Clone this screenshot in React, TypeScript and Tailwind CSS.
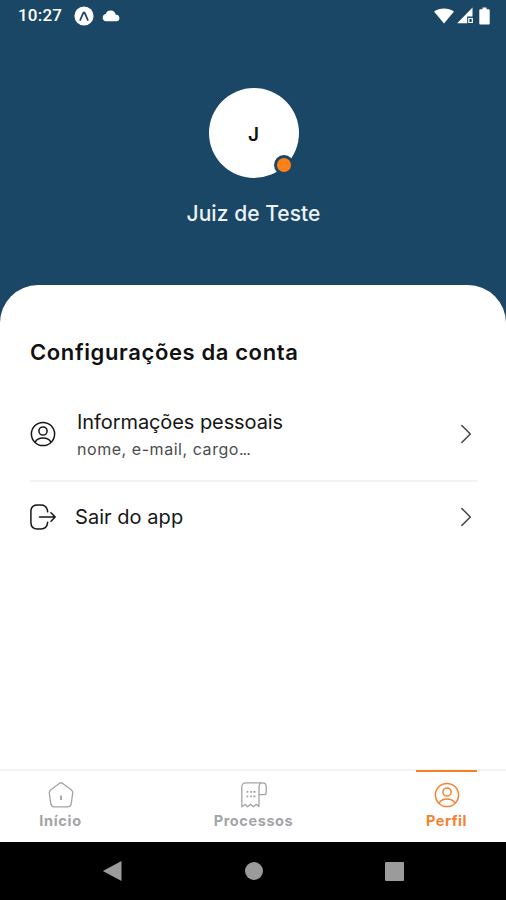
import type { ReactNode } from "react";

type Tab = {
  id: string;
  label: string;
  icon: ReactNode;
  labelClass: string;
};

function UserCircleIcon({ className }: { className: string }) {
  return (
    <svg
      viewBox="0 0 26 26"
      fill="none"
      stroke="currentColor"
      strokeWidth="1.5"
      className={className}
      aria-hidden="true"
    >
      <circle cx="13" cy="13" r="11.6" />
      <circle cx="13" cy="10" r="4.1" />
      <path d="M5.2 21.2c1.3-3 4.2-4.2 7.8-4.2s6.5 1.2 7.8 4.2" />
    </svg>
  );
}

function LogoutIcon() {
  return (
    <svg
      viewBox="0 0 28 28"
      fill="none"
      stroke="currentColor"
      strokeWidth="1.5"
      strokeLinecap="round"
      strokeLinejoin="round"
      className="h-7 w-7"
      aria-hidden="true"
    >
      <path d="M17.7 8.8C17.2 4.3 14.7 1.9 10.8 1.9H7.7C3.2 1.9.9 4.4.9 8.4v11.2c0 4 2.3 6.5 6.8 6.5h3.1c3.9 0 6.4-2.4 6.900-6.900" />
      <path d="M9.5 14H25.2M21 9.8 25.2 14 21 18.2" />
    </svg>
  );
}

function ChevronIcon() {
  return (
    <svg
      viewBox="0 0 12 20"
      fill="none"
      stroke="currentColor"
      strokeWidth="1.5"
      strokeLinecap="round"
      strokeLinejoin="round"
      className="h-5 w-3 text-[#444]"
      aria-hidden="true"
    >
      <path d="m1.8 1.5 8.5 8.5-8.5 8.5" />
    </svg>
  );
}

function HomeIcon() {
  return (
    <svg
      viewBox="0 0 26 26"
      fill="none"
      stroke="currentColor"
      strokeWidth="1.3"
      strokeLinejoin="round"
      className="h-[26px] w-[26px]"
      aria-hidden="true"
    >
      <path d="M11.2 1.4a3 3 0 0 1 3.6 0l8.6 6.6c1 .8 1.5 1.900 1.300 3.100l-1.500 10.500c-.3 2-1.600 3.200-3.500 3.200H6.300c-1.900 0-3.200-1.200-3.500-3.200L1.300 11.100C1.100 9.900 1.600 8.800 2.600 8z" />
      <path d="M13 13.500v4.500" strokeWidth="1.8" />
    </svg>
  );
}

function ReceiptIcon() {
  return (
    <svg
      viewBox="0 0 26 26"
      fill="none"
      stroke="currentColor"
      strokeWidth="1.3"
      strokeLinejoin="round"
      className="h-[26px] w-[26px]"
      aria-hidden="true"
    >
      <path d="M21.500.8H4.800C2.400.8.800 2.400.800 4.800v20l3.400-2.300 2.400 2.300 2.900-2.600 2.900 2.600 2.900-2.600 2.700 2.300V4.500C18 2.300 19.400.8 21.500.8c2.200 0 3.700 1.500 3.700 3.700v6c0 1.400-.8 2.200-2.200 2.200h-5" />
      <path
        d="M5.500 9.800h1.800M5.500 14.300h1.800M9.200 9.800h1.800M12.300 9.800h2.200M9.200 14.300h1.800M12.300 14.300h2.200"
        strokeWidth="1.7"
      />
    </svg>
  );
}

const TABS: ReadonlyArray<Tab> = [
  {
    id: "home",
    label: "Início",
    icon: <HomeIcon />,
    labelClass: "tracking-[0.7px]",
  },
  {
    id: "cases",
    label: "Processos",
    icon: <ReceiptIcon />,
    labelClass: "tracking-[0.6px]",
  },
  {
    id: "profile",
    label: "Perfil",
    icon: <UserCircleIcon className="h-[26px] w-[26px]" />,
    labelClass: "tracking-[0.5px]",
  },
];

function StatusBar() {
  return (
    <div className="flex h-[31px] items-center justify-between pl-[18px] pr-4 font-[Roboto,sans-serif] text-white">
      <div className="flex items-center">
        <span className="w-[56px] text-[17px] font-medium leading-none tracking-[0.2px]">
          10:27
        </span>
        <svg viewBox="0 0 20 20" className="h-5 w-5" aria-hidden="true">
          <circle cx="10" cy="10" r="9.6" fill="white" />
          <path
            d="M6.2 14 9.2 7.2q.8-1.5 1.6 0L13.8 14"
            fill="none"
            stroke="#1b4767"
            strokeWidth="1.8"
            strokeLinecap="round"
          />
        </svg>
        <svg
          viewBox="0 0 18 12"
          fill="white"
          className="ml-2 h-3 w-[18px]"
          aria-hidden="true"
        >
          <path d="M4 11.300a3.700 3.700 0 0 1-.3-7.300A5.200 5.200 0 0 1 13.700 4.700a3.300 3.300 0 0 1 .7 6.600z" />
        </svg>
      </div>
      <div className="flex items-center gap-0.5">
        <svg
          viewBox="0 0 20 16"
          fill="white"
          className="mr-px h-4 w-5"
          aria-hidden="true"
        >
          <path d="M0 3.500C5.500-.6 14.500-.6 20 3.500L10 15.600z" />
        </svg>
        <svg viewBox="0 0 16 17" className="h-[17px] w-4" aria-hidden="true">
          <path d="M15.500.5v9h-5.300v6.800H.2z" fill="white" />
          <path
            d="M11.800 11.500h3.500v4h-3.500z"
            fill="none"
            stroke="white"
            strokeWidth="1.2"
          />
        </svg>
        <svg
          viewBox="0 0 11 18"
          fill="white"
          className="ml-1 h-[18px] w-[11px]"
          aria-hidden="true"
        >
          <path d="M3.500.5h4v1.800h2.200q1 0 1 1v13.200q0 1-1 1H1.300q-1 0-1-1V3.300q0-1 1-1h2.200z" />
        </svg>
      </div>
    </div>
  );
}

function ProfileHeader() {
  return (
    <header className="flex h-[254px] flex-col items-center pl-px pt-[57px]">
      <div className="relative flex h-[90px] w-[90px] items-center justify-center rounded-full bg-white">
        <span className="pt-0.5 text-[19px] font-semibold leading-none text-[#111]">
          J
        </span>
        <span className="absolute bottom-[3px] right-[5px] h-5 w-5 rounded-full border-[3px] border-[#1b4767] bg-[#fb8118]" />
      </div>
      <h1 className="mt-[22px] text-[21px] font-medium leading-7 tracking-[0.05px] text-[#edf3f8]">
        Juiz de Teste
      </h1>
    </header>
  );
}

function SettingsSection() {
  return (
    <section className="flex-1 pl-[30px] pr-[29px] pt-[51px]">
      <h2 className="whitespace-nowrap text-[22px] font-semibold leading-8 tracking-[0.62px] text-[#111]">
        Configurações da conta
      </h2>
      <ul className="mt-[28px] text-[#161616]">
        <li className="flex h-[86px] items-center border-b-2 border-[#f2f2f4] pb-[9px]">
          <UserCircleIcon className="h-[26px] w-[26px]" />
          <div className="ml-[21px] flex-1 pt-[3px]">
            <div className="text-[20px] leading-7 tracking-[-0.08px]">
              Informações pessoais
            </div>
            <div className="text-[16px] leading-[26px] tracking-[0.55px] text-[#4b4b50]">
              nome, e-mail, cargo<span className="tracking-[-1px]">...</span>
            </div>
          </div>
          <span className="mr-[5px]">
            <ChevronIcon />
          </span>
        </li>
        <li className="flex h-[70px] items-center">
          <LogoutIcon />
          <div className="ml-[17px] flex-1 text-[20px] leading-7 tracking-[0.05px]">
            Sair do app
          </div>
          <span className="mr-[5px]">
            <ChevronIcon />
          </span>
        </li>
      </ul>
    </section>
  );
}

function TabBar({ active }: { active: string }) {
  return (
    <nav className="flex h-[73px] justify-between border-t-2 border-[#f3f3f4] pl-[30px] pr-[29px]">
      {TABS.map((tab) => (
        <button
          key={tab.id}
          type="button"
          className={`-mt-px flex flex-col items-center border-t-2 pt-[10px] ${
            tab.id === "cases" ? "w-[85px]" : "w-[61px]"
          } ${
            tab.id === active
              ? "border-[#fa7f20] text-[#f58230]"
              : "border-transparent text-[#a3a4a8]"
          }`}
        >
          {tab.icon}
          <span
            className={`mt-[3px] text-[14.5px] font-bold leading-5 ${tab.labelClass}`}
          >
            {tab.label}
          </span>
        </button>
      ))}
    </nav>
  );
}

function SystemNav() {
  return (
    <div className="flex h-[58px] items-center justify-between bg-black px-[102px] text-[#9b9b9b]">
      <svg
        viewBox="0 0 20 22"
        fill="currentColor"
        className="h-[22px] w-5"
        aria-hidden="true"
      >
        <path d="M19.500 1v20L.8 11z" />
      </svg>
      <span className="h-[18px] w-[18px] rounded-full bg-[#9b9b9b]" />
      <span className="h-[19px] w-[19px] rounded-[1px] bg-[#9b9b9b]" />
    </div>
  );
}

export default function App() {
  return (
    <div className="flex h-[900px] w-[506px] flex-col overflow-hidden bg-[#1b4767] font-[Inter,sans-serif]">
      <StatusBar />
      <ProfileHeader />
      <main className="flex flex-1 flex-col rounded-t-[38px] bg-white">
        <SettingsSection />
        <TabBar active="profile" />
      </main>
      <SystemNav />
    </div>
  );
}
